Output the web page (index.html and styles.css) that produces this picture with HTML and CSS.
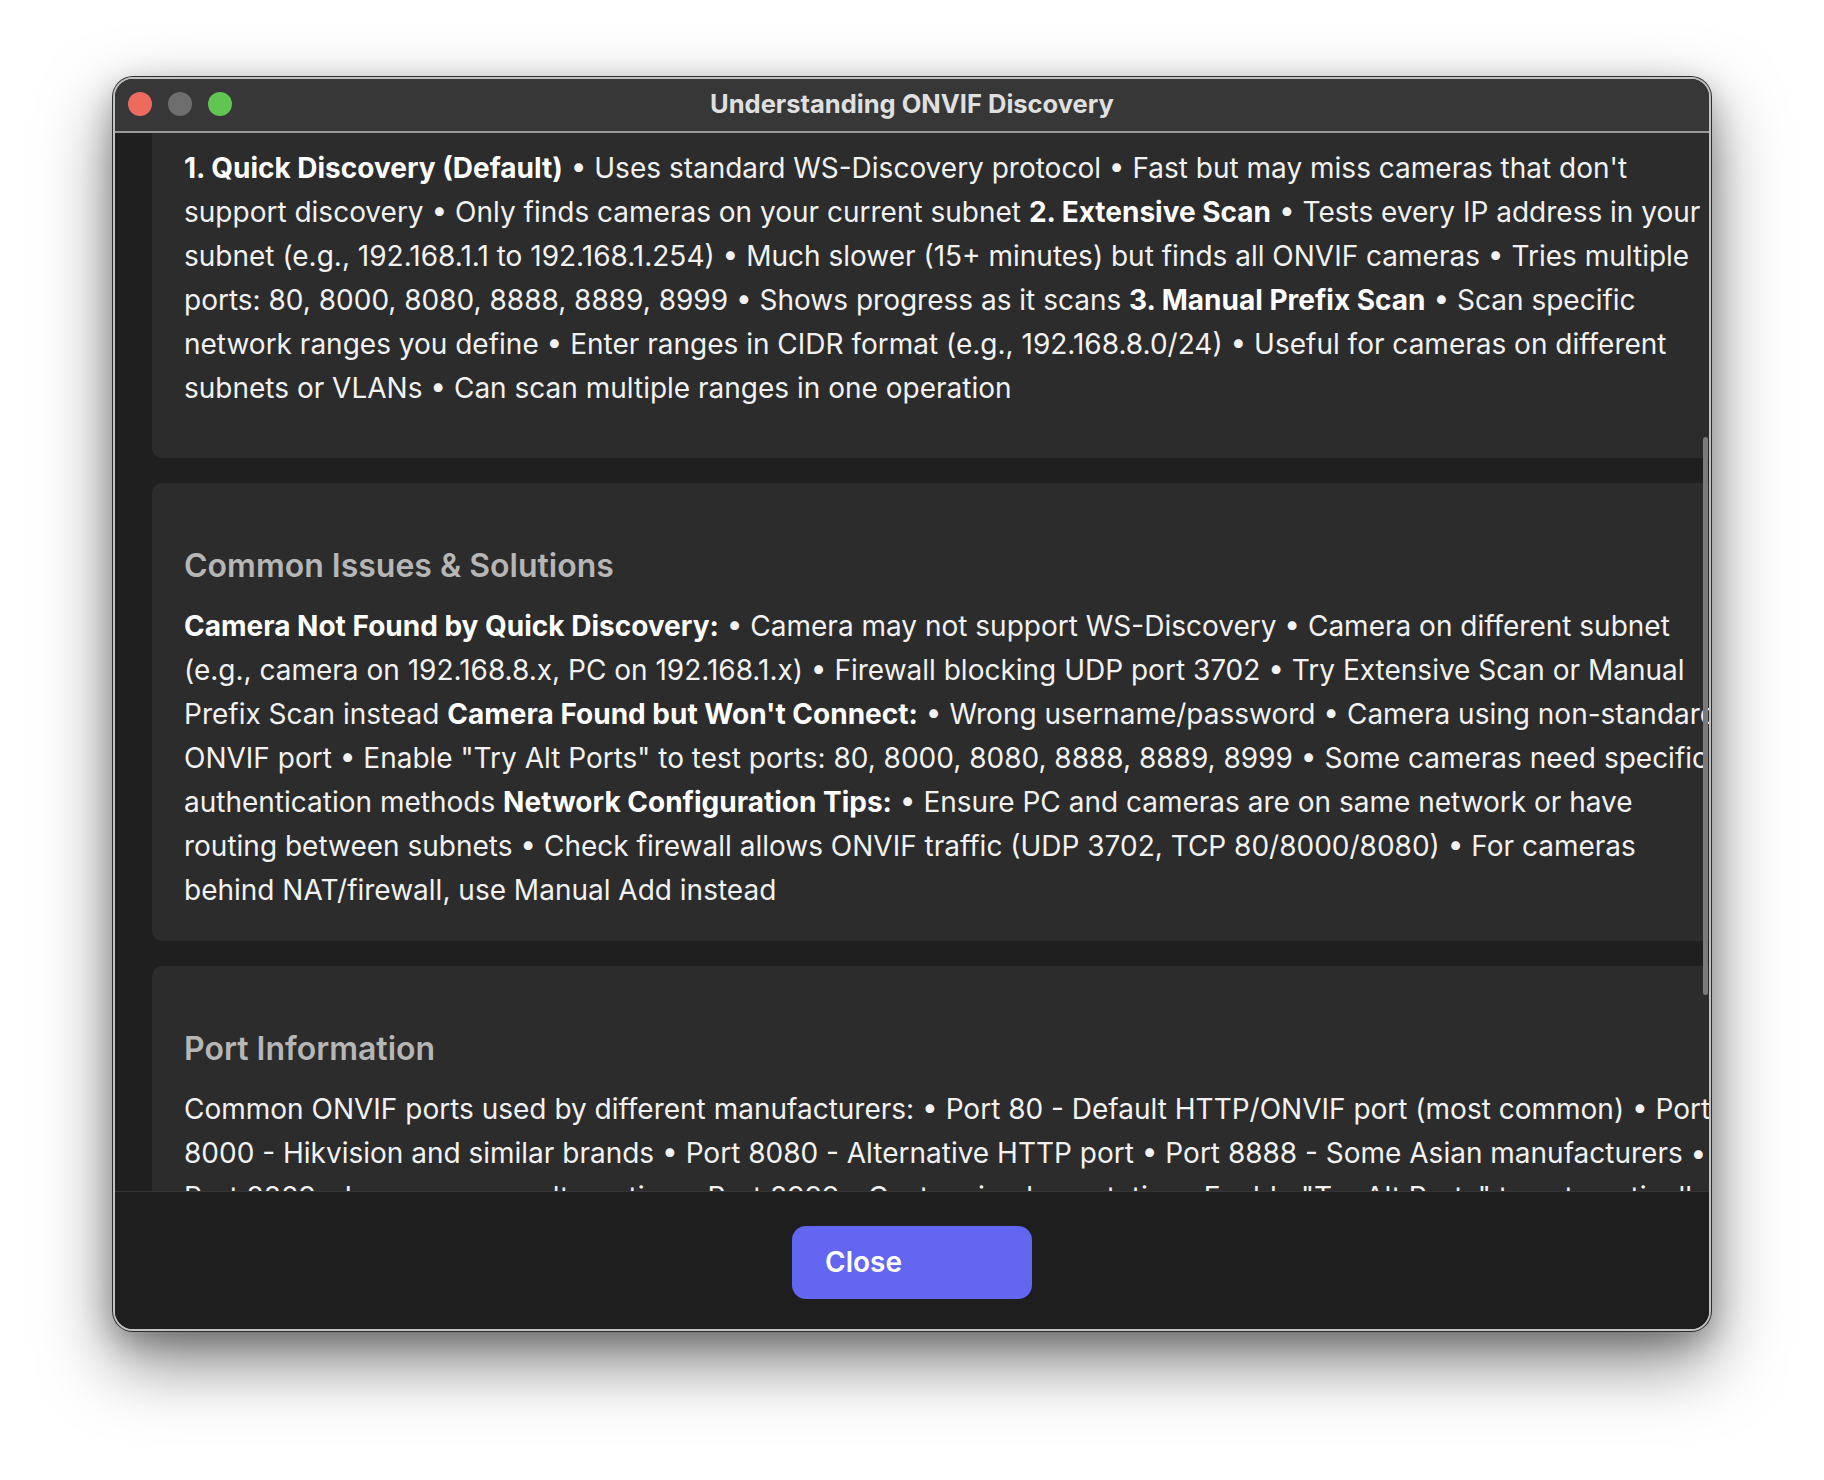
FILE: index.html
```html
<!DOCTYPE html>
<html lang="en">
<head>
<meta charset="utf-8">
<title>Understanding ONVIF Discovery</title>
<link rel="stylesheet" href="styles.css">
</head>
<body>
<div class="stage">
  <div class="window">
    <header class="titlebar">
      <div class="lights">
        <span class="light light-red"></span>
        <span class="light light-gray"></span>
        <span class="light light-green"></span>
      </div>
      <div class="title">Understanding ONVIF Discovery</div>
      <div></div>
    </header>

    <main class="content">
      <div class="cards">
        <section class="card card-scrolled">
          <p class="body">
            <span class="line"><b>1. Quick Discovery (Default)</b> • Uses standard WS-Discovery protocol • Fast but may miss cameras that don't</span>
            <span class="line">support discovery • Only finds cameras on your current subnet <b>2. Extensive Scan</b> • Tests every IP address in your</span>
            <span class="line">subnet (e.g., 192.168.1.1 to 192.168.1.254) • Much slower (15+ minutes) but finds all ONVIF cameras • Tries multiple</span>
            <span class="line">ports: 80, 8000, 8080, 8888, 8889, 8999 • Shows progress as it scans <b>3. Manual Prefix Scan</b> • Scan specific</span>
            <span class="line">network ranges you define • Enter ranges in CIDR format (e.g., 192.168.8.0/24) • Useful for cameras on different</span>
            <span class="line">subnets or VLANs • Can scan multiple ranges in one operation</span>
          </p>
        </section>

        <section class="card">
          <h3 class="card-title">Common Issues &amp; Solutions</h3>
          <p class="body">
            <span class="line"><b>Camera Not Found by Quick Discovery:</b> • Camera may not support WS-Discovery • Camera on different subnet</span>
            <span class="line">(e.g., camera on 192.168.8.x, PC on 192.168.1.x) • Firewall blocking UDP port 3702 • Try Extensive Scan or Manual</span>
            <span class="line">Prefix Scan instead <b>Camera Found but Won't Connect:</b> • Wrong username/password • Camera using non-standard</span>
            <span class="line">ONVIF port • Enable "Try Alt Ports" to test ports: 80, 8000, 8080, 8888, 8889, 8999 • Some cameras need specific</span>
            <span class="line">authentication methods <b>Network Configuration Tips:</b> • Ensure PC and cameras are on same network or have</span>
            <span class="line">routing between subnets • Check firewall allows ONVIF traffic (UDP 3702, TCP 80/8000/8080) • For cameras</span>
            <span class="line">behind NAT/firewall, use Manual Add instead</span>
          </p>
        </section>

        <section class="card">
          <h3 class="card-title">Port Information</h3>
          <p class="body">
            <span class="line">Common ONVIF ports used by different manufacturers: • Port 80 - Default HTTP/ONVIF port (most common) • Port</span>
            <span class="line">8000 - Hikvision and similar brands • Port 8080 - Alternative HTTP port • Port 8888 - Some Asian manufacturers •</span>
            <span class="line">Port 8889 - Less common alternative • Port 8999 - Custom implementations Enable "Try Alt Ports" to automatically</span>
            <span class="line">test these ports during discovery</span>
          </p>
        </section>
      </div>
      <div class="scrollbar"></div>
    </main>

    <footer class="footer">
      <button class="btn-close" type="button">Close</button>
    </footer>
  </div>
</div>
</body>
</html>
```

FILE: styles.css
```css
* {
  box-sizing: border-box;
}

html, body {
  margin: 0;
  padding: 0;
  background: #ffffff;
}

body {
  font-family: Inter, "Noto Sans", "Liberation Sans", sans-serif;
  width: 1824px;
  height: 1480px;
  overflow: hidden;
}

.stage {
  padding: 77px 0 0 113px;
}

.window {
  width: 1598px;
  height: 1254px;
  border-radius: 20px;
  border: 2px solid #c2c2c2;
  box-shadow: 0 0 0 1px #2e2e2e, 0 30px 70px rgba(0, 0, 0, 0.5), 0 10px 30px rgba(0, 0, 0, 0.25);
  background: #1f1f1f;
  overflow: hidden;
  display: flex;
  flex-direction: column;
}

.titlebar {
  height: 54px;
  flex: none;
  background: #373737;
  border-bottom: 2px solid #9a9a9a;
  display: grid;
  grid-template-columns: 1fr auto 1fr;
  align-items: center;
}

.lights {
  display: flex;
  gap: 16px;
  padding-left: 13px;
  margin-top: -3px;
}

.light {
  width: 24px;
  height: 24px;
  border-radius: 50%;
  display: block;
}

.light-red { background: #ec6a5e; }
.light-gray { background: #6e6e6e; }
.light-green { background: #61c554; }

.title {
  font-size: 25.5px;
  font-weight: 700;
  color: #e0e0e0;
  margin-top: -3px;
}

.content {
  flex: 1;
  position: relative;
  overflow: hidden;
  padding-left: 37px;
}

.cards {
  display: flex;
  flex-direction: column;
  gap: 25px;
  align-items: flex-start;
}

.card {
  width: 1640px;
  flex: none;
  background: #2c2c2c;
  border-radius: 10px;
  padding: 32px 32px 29px 32px;
}

.card-scrolled {
  margin-top: -19px;
  padding-bottom: 48px;
  border-radius: 0 0 10px 10px;
}

.card-title {
  margin: 31px 0 18px;
  font-size: 32px;
  line-height: 40px;
  font-weight: 600;
  color: #b6b6b6;
}

.body {
  margin: 0;
  font-size: 28px;
  line-height: 44px;
  color: #f2f2f2;
}

.body b {
  font-weight: 700;
  color: #ffffff;
}

.line {
  display: block;
  white-space: nowrap;
}

.scrollbar {
  position: absolute;
  right: 1px;
  top: 304px;
  width: 5px;
  height: 558px;
  border-radius: 3px;
  background: #7b7b7b;
}

.footer {
  flex: none;
  height: 138px;
  border-top: 1px solid #353535;
  background: #1e1e1e;
  display: flex;
  justify-content: center;
  align-items: center;
  padding-top: 3px;
}

.btn-close {
  width: 240px;
  height: 73px;
  border: none;
  border-radius: 14px;
  background: #6366f1;
  color: #ffffff;
  font-family: Inter, "Noto Sans", "Liberation Sans", sans-serif;
  font-size: 28px;
  font-weight: 600;
  text-align: left;
  padding: 0 0 0 33px;
  cursor: pointer;
}
```
